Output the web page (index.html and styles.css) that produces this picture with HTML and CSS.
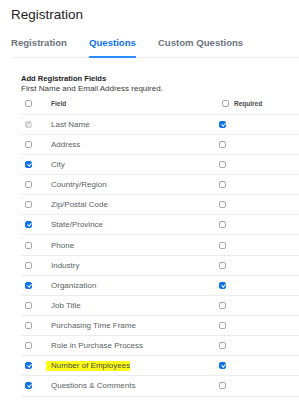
FILE: index.html
```html
<!DOCTYPE html>
<html lang="en">
<head>
  <meta charset="UTF-8">
  <meta name="viewport" content="width=device-width, initial-scale=1.0">
  <title>Registration</title>
  <link rel="stylesheet" href="styles.css">
</head>
<body>
  <div class="page">
    <h1 class="title">Registration</h1>
    <div class="tabs">
      <span class="tab">Registration</span>
      <span class="tab active">Questions</span>
      <span class="tab">Custom Questions</span>
    </div>
    <div class="section">
      <div class="section-title">Add Registration Fields</div>
      <div class="section-note">First Name and Email Address required.</div>
      <div class="fields">
        <div class="row head">
          <span class="cell"><span class="cb"></span></span>
          <span class="cell name">Field</span>
          <span class="cell req"><span class="cb"></span>Required</span>
        </div>
        <div class="row">
          <span class="cell"><span class="cb on dis"></span></span>
          <span class="cell name">Last Name</span>
          <span class="cell req"><span class="cb on"></span></span>
        </div>
        <div class="row">
          <span class="cell"><span class="cb"></span></span>
          <span class="cell name">Address</span>
          <span class="cell req"><span class="cb"></span></span>
        </div>
        <div class="row">
          <span class="cell"><span class="cb on"></span></span>
          <span class="cell name">City</span>
          <span class="cell req"><span class="cb"></span></span>
        </div>
        <div class="row">
          <span class="cell"><span class="cb"></span></span>
          <span class="cell name">Country/Region</span>
          <span class="cell req"><span class="cb"></span></span>
        </div>
        <div class="row">
          <span class="cell"><span class="cb"></span></span>
          <span class="cell name">Zip/Postal Code</span>
          <span class="cell req"><span class="cb"></span></span>
        </div>
        <div class="row">
          <span class="cell"><span class="cb on"></span></span>
          <span class="cell name">State/Province</span>
          <span class="cell req"><span class="cb"></span></span>
        </div>
        <div class="row">
          <span class="cell"><span class="cb"></span></span>
          <span class="cell name">Phone</span>
          <span class="cell req"><span class="cb"></span></span>
        </div>
        <div class="row">
          <span class="cell"><span class="cb"></span></span>
          <span class="cell name">Industry</span>
          <span class="cell req"><span class="cb"></span></span>
        </div>
        <div class="row">
          <span class="cell"><span class="cb on"></span></span>
          <span class="cell name">Organization</span>
          <span class="cell req"><span class="cb on"></span></span>
        </div>
        <div class="row">
          <span class="cell"><span class="cb"></span></span>
          <span class="cell name">Job Title</span>
          <span class="cell req"><span class="cb"></span></span>
        </div>
        <div class="row">
          <span class="cell"><span class="cb"></span></span>
          <span class="cell name">Purchasing Time Frame</span>
          <span class="cell req"><span class="cb"></span></span>
        </div>
        <div class="row">
          <span class="cell"><span class="cb"></span></span>
          <span class="cell name">Role in Purchase Process</span>
          <span class="cell req"><span class="cb"></span></span>
        </div>
        <div class="row">
          <span class="cell"><span class="cb on"></span></span>
          <span class="cell name"><mark class="hl">Number of Employees</mark></span>
          <span class="cell req"><span class="cb on"></span></span>
        </div>
        <div class="row">
          <span class="cell"><span class="cb on"></span></span>
          <span class="cell name">Questions &amp; Comments</span>
          <span class="cell req"><span class="cb"></span></span>
        </div>
      </div>
    </div>
  </div>
</body>
</html>
```

FILE: styles.css
```css
body {
  margin: 0;
  background: #fff;
  font-family: "Liberation Sans", Arial, sans-serif;
  color: #222;
}
.page {
  padding: 7px 0 0 11px;
}
.title {
  margin: 0;
  font-size: 13.5px;
  font-weight: 400;
  line-height: 16px;
  color: #232323;
}
.tabs {
  display: flex;
  gap: 22px;
  margin-top: 14px;
  border-bottom: 1px solid #eeeeee;
}
.tab {
  font-size: 9.6px;
  font-weight: 700;
  line-height: 12px;
  padding-bottom: 8px;
  color: #6e7480;
}
.tab.active {
  color: #0e72ed;
  border-bottom: 2px solid #2d8cff;
  margin-bottom: -1px;
  padding-bottom: 7px;
}
.section {
  padding: 16px 0 0 10px;
}
.section-title {
  font-size: 7.6px;
  font-weight: 700;
  line-height: 10px;
  color: #232323;
}
.section-note {
  font-size: 8px;
  line-height: 10px;
  color: #3a3a3a;
}
.row {
  display: grid;
  grid-template-columns: 30px 168px 1fr;
  align-items: center;
  height: 19.15px;
  border-bottom: 1px solid #ececec;
}
.row.head {
  height: 19.6px;
}
.cell {
  display: flex;
  align-items: center;
}
.cell:first-child {
  padding-left: 4px;
}
.name {
  font-size: 8px;
  color: #5a5f66;
}
.head .name,
.head .req {
  font-size: 6.5px;
  font-weight: 700;
  color: #4a4a4a;
}
.head .req {
  padding-left: 3px;
}
.head .req .cb {
  margin-right: 5px;
}
.cb {
  position: relative;
  box-sizing: border-box;
  width: 7px;
  height: 7px;
  border: 1px solid #a8a8a8;
  border-radius: 2px;
  background: #fff;
}
.cb.on {
  background: #0e72ed;
  border-color: #0e72ed;
}
.cb.on::after {
  content: "";
  position: absolute;
  left: 1.5px;
  top: 0;
  width: 1.6px;
  height: 3.2px;
  border-right: 1.4px solid #fff;
  border-bottom: 1.4px solid #fff;
  transform: rotate(40deg);
}
.cb.dis {
  background: #d4d4d4;
  border-color: #d0d0d0;
}
.hl {
  background: #ffff1a;
  color: #4a4a3a;
  padding: 1px 0 1px 5px;
  margin-left: -5px;
  line-height: 8px;
}
```
